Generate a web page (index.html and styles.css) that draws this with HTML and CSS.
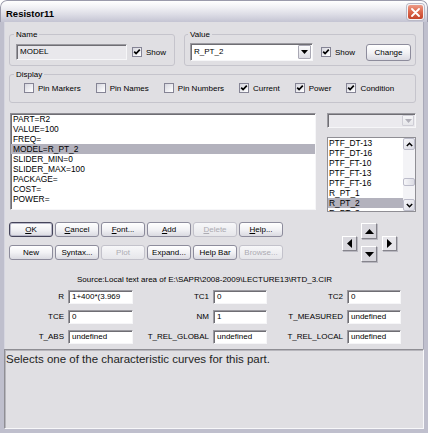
FILE: index.html
```html
<!DOCTYPE html>
<html>
<head>
<meta charset="utf-8">
<link rel="stylesheet" href="styles.css">
</head>
<body>
<div class="window">
  <div class="titlebar">
    <span class="title">Resistor11</span>
    <span class="close"><svg width="9" height="9" viewBox="0 0 9 9"><path d="M1 1L8 8M8 1L1 8" stroke="#fff" stroke-width="1.8" stroke-linecap="round"/></svg></span>
  </div>
  <div class="frame">
    <div class="content">
      <div class="toprow">
        <div class="group g-name">
          <div class="glabel">Name</div>
          <div class="grow">
            <div class="edit ro">MODEL</div>
            <span class="cb on"><svg width="8" height="8" viewBox="0 0 8 8"><path d="M1.2 3.6L3.1 5.6L6.8 1.6" stroke="#000" stroke-width="1.7" fill="none"/></svg></span>
            <span class="cbl">Show</span>
          </div>
        </div>
        <div class="group g-value">
          <div class="glabel">Value</div>
          <div class="grow vrow">
            <div class="combo"><span class="ctext">R_PT_2</span><span class="dd"><svg width="7" height="4" viewBox="0 0 7 4"><path d="M0 0H7L3.5 4Z" fill="#000"/></svg></span></div>
            <span class="cb on vcb"><svg width="8" height="8" viewBox="0 0 8 8"><path d="M1.2 3.6L3.1 5.6L6.8 1.6" stroke="#000" stroke-width="1.7" fill="none"/></svg></span>
            <span class="cbl">Show</span>
            <span class="btn change">Change</span>
          </div>
        </div>
      </div>

      <div class="group g-display">
        <div class="glabel">Display</div>
        <div class="drow">
          <span class="opt"><span class="cb"></span>Pin Markers</span>
          <span class="opt"><span class="cb"></span>Pin Names</span>
          <span class="opt"><span class="cb"></span>Pin Numbers</span>
          <span class="opt"><span class="cb on"><svg width="8" height="8" viewBox="0 0 8 8"><path d="M1.2 3.6L3.1 5.6L6.8 1.6" stroke="#000" stroke-width="1.7" fill="none"/></svg></span>Current</span>
          <span class="opt"><span class="cb on"><svg width="8" height="8" viewBox="0 0 8 8"><path d="M1.2 3.6L3.1 5.6L6.8 1.6" stroke="#000" stroke-width="1.7" fill="none"/></svg></span>Power</span>
          <span class="opt"><span class="cb on"><svg width="8" height="8" viewBox="0 0 8 8"><path d="M1.2 3.6L3.1 5.6L6.8 1.6" stroke="#000" stroke-width="1.7" fill="none"/></svg></span>Condition</span>
        </div>
      </div>

      <div class="mid">
        <div class="textarea">
          <div class="line">PART=R2</div>
          <div class="line">VALUE=100</div>
          <div class="line">FREQ=</div>
          <div class="line sel">MODEL=R_PT_2</div>
          <div class="line">SLIDER_MIN=0</div>
          <div class="line">SLIDER_MAX=100</div>
          <div class="line">PACKAGE=</div>
          <div class="line">COST=</div>
          <div class="line">POWER=</div>
        </div>
        <div class="side">
          <div class="combo dis"><span class="ctext"></span><span class="dd"><svg width="7" height="4" viewBox="0 0 7 4"><path d="M0 0H7L3.5 4Z" fill="#b0afb8"/></svg></span></div>
          <div class="listbox">
            <div class="items">
              <div class="item">PTF_DT-13</div>
              <div class="item">PTF_DT-16</div>
              <div class="item">PTF_FT-10</div>
              <div class="item">PTF_FT-13</div>
              <div class="item">PTF_FT-16</div>
              <div class="item">R_PT_1</div>
              <div class="item sel">R_PT_2</div>
              <div class="item">R_PT_3</div>
            </div>
            <div class="vscroll">
              <span class="sbtn"><svg width="7" height="5" viewBox="0 0 7 5"><path d="M0.8 4L3.5 1.3L6.2 4" stroke="#000" stroke-width="1.5" fill="none"/></svg></span>
              <span class="thumb"></span>
              <span class="sbtn down"><svg width="7" height="5" viewBox="0 0 7 5"><path d="M0.8 1L3.5 3.7L6.2 1" stroke="#000" stroke-width="1.5" fill="none"/></svg></span>
            </div>
          </div>
        </div>
      </div>

      <div class="btnarea">
        <div class="buttons">
          <span class="btn def"><u>O</u>K</span>
          <span class="btn"><u>C</u>ancel</span>
          <span class="btn"><u>F</u>ont...</span>
          <span class="btn"><u>A</u>dd</span>
          <span class="btn dis"><u>D</u>elete</span>
          <span class="btn"><u>H</u>elp...</span>
          <span class="btn">New</span>
          <span class="btn">Syntax...</span>
          <span class="btn dis">Plot</span>
          <span class="btn">Expand...</span>
          <span class="btn">Help Bar</span>
          <span class="btn dis">Browse...</span>
        </div>
        <div class="arrows">
          <span class="abtn a-up"><svg width="9" height="5" viewBox="0 0 9 5"><path d="M0 5H9L4.5 0Z" fill="#000"/></svg></span>
          <span class="abtn a-left"><svg width="5" height="9" viewBox="0 0 5 9"><path d="M5 0V9L0 4.5Z" fill="#000"/></svg></span>
          <span class="abtn a-right"><svg width="5" height="9" viewBox="0 0 5 9"><path d="M0 0V9L5 4.5Z" fill="#000"/></svg></span>
          <span class="abtn a-down"><svg width="9" height="5" viewBox="0 0 9 5"><path d="M0 0H9L4.5 5Z" fill="#000"/></svg></span>
        </div>
      </div>

      <div class="source">Source:Local text area of E:\SAPR\2008-2009\LECTURE13\RTD_3.CIR</div>

      <div class="params">
        <span class="plabel">R</span><span class="pbox">1+400*(3.969</span>
        <span class="plabel">TC1</span><span class="pbox">0</span>
        <span class="plabel">TC2</span><span class="pbox">0</span>
        <span class="plabel">TCE</span><span class="pbox">0</span>
        <span class="plabel">NM</span><span class="pbox">1</span>
        <span class="plabel">T_MEASURED</span><span class="pbox">undefined</span>
        <span class="plabel">T_ABS</span><span class="pbox">undefined</span>
        <span class="plabel">T_REL_GLOBAL</span><span class="pbox">undefined</span>
        <span class="plabel">T_REL_LOCAL</span><span class="pbox">undefined</span>
      </div>
    </div>
    <div class="status">Selects one of the characteristic curves for this part.</div>
  </div>
</div>
</body>
</html>
```

FILE: styles.css
```css
* { box-sizing: border-box; }
html, body { margin: 0; padding: 0; background: #ffffff; }
body {
  font-family: "Liberation Sans", Arial, sans-serif;
  font-size: 8px;
  color: #000;
}
.window {
  width: 428px;
  height: 433px;
  display: flex;
  flex-direction: column;
  border-radius: 7px 7px 0 0;
  overflow: hidden;
  background: #e0dfe3;
}
.titlebar {
  height: 22px;
  flex: none;
  display: flex;
  align-items: flex-start;
  padding: 0 3px 0 5px;
  border: 1px solid #9a9aab;
  border-bottom: none;
  border-radius: 7px 7px 0 0;
  background: linear-gradient(#ffffff 0%, #f1f1f5 30%, #dcdce5 65%, #c4c4d3 100%);
}
.title {
  flex: 1;
  font-weight: bold;
  font-size: 9.5px;
  line-height: 12px;
  margin-top: 7px;
}
.close {
  width: 17px;
  height: 16px;
  margin-top: 3px;
  border: 1px solid #f4f4f6;
  border-radius: 3px;
  background: linear-gradient(#ec9c88 0%, #de6a4f 45%, #c4432a 100%);
  display: flex;
  align-items: center;
  justify-content: center;
  box-shadow: 0 0 0 1px #b9b9c6;
}
.frame {
  flex: 1;
  display: flex;
  flex-direction: column;
  border: solid #bfbfcd;
  border-width: 0 4px 4px 4px;
  box-shadow: inset 1px 0 0 #d6d6e0, inset -1px 0 0 #a9a9b8;
}
.content {
  padding: 0 8px 0 5px;
}
.toprow {
  display: flex;
  gap: 9px;
  margin-top: 12px;
}
.group {
  border: 1px solid #c5c4cc;
  border-radius: 3px;
}
.glabel {
  width: max-content;
  height: 11px;
  line-height: 11px;
  margin: -6px 0 0 -2px;
  padding: 0 2px;
  background: #e0dfe3;
}
.g-name {
  width: 166px;
  height: 32px;
  padding: 0 6px;
}
.g-value {
  flex: 1;
  height: 32px;
  padding: 0 4px 0 5px;
}
.grow {
  display: flex;
  align-items: center;
  margin-top: 4px;
  height: 16px;
}
.vrow {
  margin-top: 3px;
  height: 18px;
}
.edit {
  width: 111px;
  height: 16px;
  line-height: 13px;
  padding-left: 3px;
  border: 1px solid;
  border-color: #9b9aa0 #f6f6f8 #f6f6f8 #9b9aa0;
  box-shadow: inset 1px 1px 0 #6f6e74;
}
.edit.ro { background: #e9e8ec; }
.cb {
  width: 10px;
  height: 10px;
  flex: none;
  border: 1px solid #858495;
  background: linear-gradient(135deg, #d6d6de 0%, #f4f4f7 70%, #ffffff 100%);
  display: inline-flex;
  align-items: center;
  justify-content: center;
}
.grow .cb { margin-left: 5px; }
.grow .vcb { margin-left: 8px; }
.cbl { margin-left: 4px; }
.combo {
  width: 123px;
  height: 18px;
  display: flex;
  align-items: stretch;
  background: #ffffff;
  border: 1px solid;
  border-color: #9b9aa0 #f6f6f8 #f6f6f8 #9b9aa0;
  box-shadow: inset 1px 1px 0 #6f6e74;
}
.ctext {
  flex: 1;
  line-height: 15px;
  padding-left: 3px;
}
.dd {
  width: 13px;
  margin: 1px 1px 1px 0;
  display: flex;
  align-items: center;
  justify-content: center;
  border: 1px solid #a9a8b4;
  border-radius: 1px;
  background: linear-gradient(#fbfbfc, #dcdce3);
}
.btn {
  display: flex;
  align-items: center;
  justify-content: center;
  height: 15px;
  border: 1px solid #8d8c9c;
  border-radius: 3px;
  background: linear-gradient(#ffffff 0%, #f2f2f5 50%, #dadae1 100%);
  white-space: nowrap;
}
.btn u { text-decoration: underline; text-underline-offset: 1px; }
.btn.def { border-color: #45445a; box-shadow: inset 0 0 0 1px #b8b8c8; }
.btn.dis { color: #acabb2; border-color: #c3c2cb; background: linear-gradient(#f7f7f9, #e6e6ea); }
.change {
  margin-left: auto;
  width: 45px;
  height: 17px;
}
.g-display {
  margin-top: 8px;
  height: 29px;
  padding: 0 6px;
}
.drow {
  display: flex;
  align-items: center;
  margin: 3px 0 0 8px;
  height: 10px;
}
.opt {
  display: flex;
  align-items: center;
  margin-right: 15px;
  white-space: nowrap;
}
.opt .cb { margin-right: 4px; }
.mid {
  display: flex;
  margin-top: 10px;
}
.textarea {
  margin-left: 1px;
  width: 306px;
  height: 97px;
  background: #ffffff;
  border: 1px solid;
  border-color: #8f8e94 #f6f6f8 #f6f6f8 #8f8e94;
  box-shadow: inset 1px 1px 0 #6f6e74;
  font-size: 8.4px;
  overflow: hidden;
}
.line {
  height: 10px;
  line-height: 10px;
  padding-left: 2px;
  white-space: nowrap;
}
.line.sel, .item.sel { background: #b3b2bd; }
.side {
  margin-left: auto;
  width: 89px;
}
.combo.dis {
  width: 89px;
  height: 15px;
  background: #ebeaee;
}
.combo.dis .dd {
  width: 12px;
  border-color: #cfced6;
  background: linear-gradient(#f6f6f8, #e6e6ea);
}
.listbox {
  margin-top: 9px;
  height: 75px;
  display: flex;
  background: #ffffff;
  border: 1px solid #8f8e94;
  overflow: hidden;
}
.items {
  flex: 1;
  font-size: 8.4px;
}
.item {
  height: 10px;
  line-height: 10px;
  padding-left: 1px;
  white-space: nowrap;
}
.vscroll {
  width: 12px;
  display: flex;
  flex-direction: column;
  background: #f3f3f6;
}
.sbtn {
  height: 12px;
  flex: none;
  display: flex;
  align-items: center;
  justify-content: center;
  border: 1px solid #bcbcca;
  border-radius: 2px;
  background: linear-gradient(135deg, #f6f6f9, #d9d9e3);
}
.sbtn.down { margin-top: auto; height: 12px; }
.thumb {
  margin-top: 28px;
  height: 8px;
  flex: none;
  border: 1px solid #bcbcca;
  border-radius: 2px;
  background: linear-gradient(90deg, #f6f6f9, #dcdce4);
}
.btnarea {
  display: flex;
  margin-top: 10px;
}
.buttons {
  display: grid;
  grid-template-columns: repeat(6, 44px);
  grid-auto-rows: 15px;
  column-gap: 2px;
  row-gap: 8px;
}
.arrows {
  display: grid;
  grid-template-columns: 15px 4px 16px 5px 15px;
  grid-template-rows: 13px 3px 7px 5px 11px;
  margin: 1px 0 0 59px;
}
.abtn {
  display: flex;
  align-items: center;
  justify-content: center;
  background: #d9d8de;
  border: 1px solid;
  border-color: #ffffff #85848c #85848c #ffffff;
  box-shadow: 1px 1px 0 #b9b8c0;
}
.a-up { grid-column: 3; grid-row: 1 / 3; }
.a-left { grid-column: 1; grid-row: 2 / 5; }
.a-right { grid-column: 5; grid-row: 2 / 5; background: #e6e5ea; }
.a-down { grid-column: 3; grid-row: 4 / 6; }
.source {
  margin-top: 13px;
  padding-left: 68px;
  height: 10px;
  line-height: 10px;
  white-space: nowrap;
}
.params {
  display: grid;
  grid-template-columns: 59px 65px 80px 54px 80px 54px;
  grid-auto-rows: 14px;
  row-gap: 6px;
  margin-top: 5px;
}
.plabel {
  text-align: right;
  padding-right: 4px;
  line-height: 14px;
  white-space: nowrap;
}
.pbox {
  background: #ffffff;
  border: 1px solid;
  border-color: #9b9aa0 #f6f6f8 #f6f6f8 #9b9aa0;
  box-shadow: inset 1px 1px 0 #6f6e74;
  line-height: 12px;
  padding-left: 3px;
  white-space: nowrap;
  overflow: hidden;
}
.status {
  flex: 1;
  margin-top: 5px;
  border: 1px solid;
  border-color: #8f8e94 #f8f8fa #f8f8fa #8f8e94;
  box-shadow: inset 1px 1px 0 #b7b6bc;
  padding: 2px 0 0 1px;
  font-size: 11.5px;
  line-height: 14px;
  color: #1e1e1e;
  white-space: nowrap;
}
```
